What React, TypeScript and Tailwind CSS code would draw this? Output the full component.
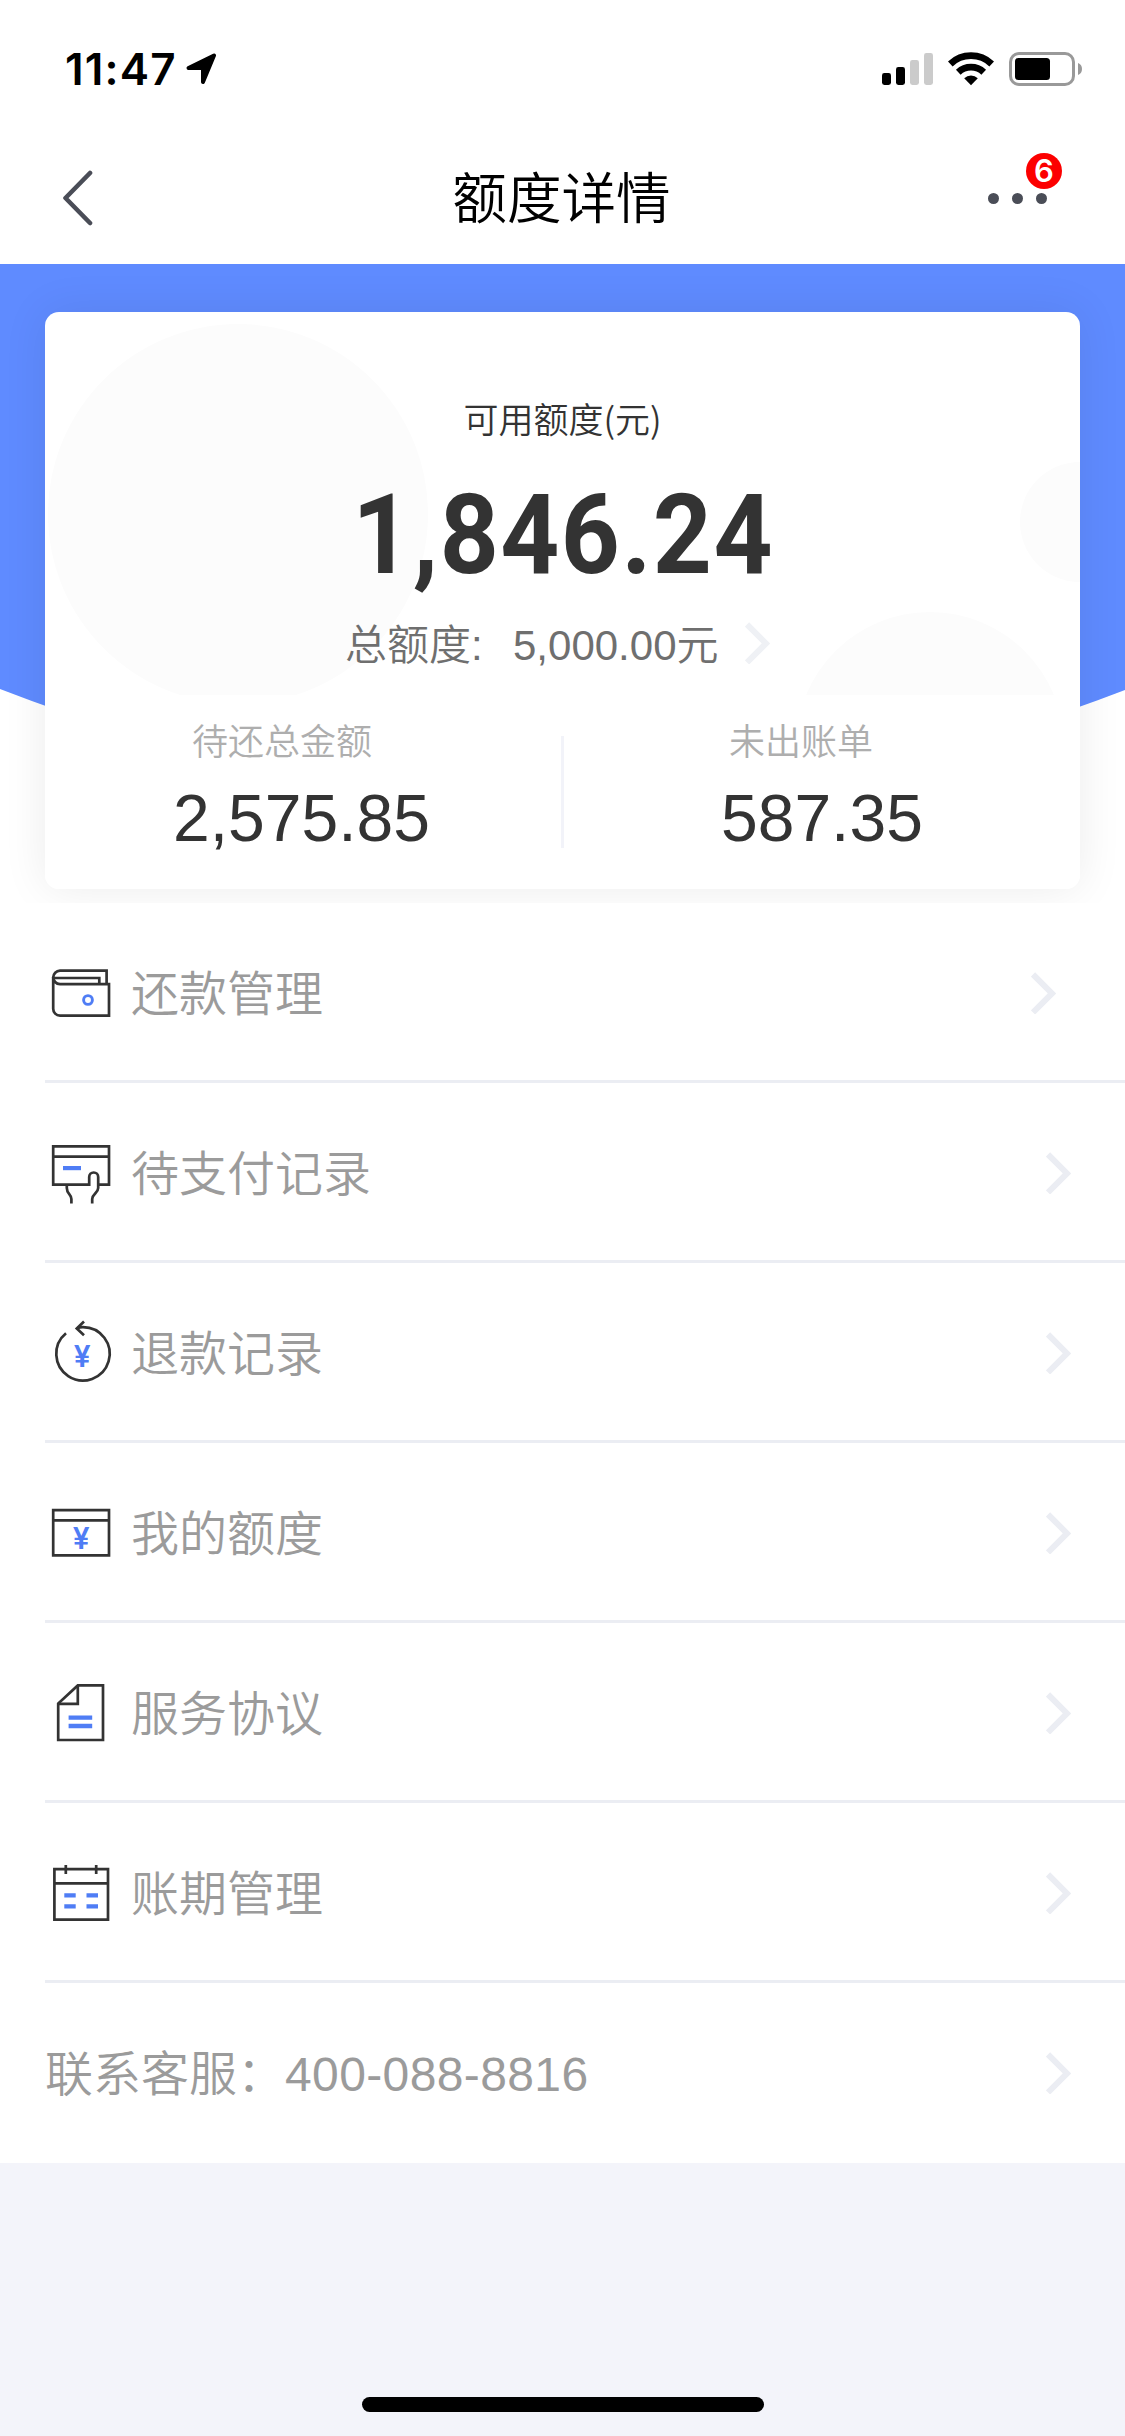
import type { ReactNode } from "react";

const DARK = "#333333";
const BLUE = "#4f7df5";

function Chevron({ className = "", color = "#ebedf3" }: { className?: string; color?: string }) {
  return (
    <svg width="26" height="42" viewBox="0 0 26 42" fill="none" className={className}>
      <path d="M2 2.4 L21 21.4 L2 40.4" stroke={color} strokeWidth="6" />
    </svg>
  );
}

function Icon({ children }: { children: ReactNode }) {
  return (
    <svg width="66" height="66" viewBox="0 0 66 66" fill="none" stroke={DARK} strokeWidth="2.7" className="mt-[3px] shrink-0">
      {children}
    </svg>
  );
}

function Yen({ x, y }: { x: number; y: number }) {
  return (
    <text x={x} y={y} textAnchor="middle" fill={BLUE} stroke="none" className="font-['Inter'] text-[30px] font-semibold">
      ¥
    </text>
  );
}

const WalletIcon = (
  <Icon>
    <path d="M5.2 17.5 A7 7 0 0 1 12 10.6 H58.6 V24" />
    <path d="M6 18 H51.3 V24" />
    <path d="M5.2 17 A7 7 0 0 0 12 24.2 H61 V55.7 H12 A7 7 0 0 1 5.2 48.7 Z" />
    <circle cx="40" cy="40" r="4.4" stroke={BLUE} strokeWidth="2.9" />
  </Icon>
);

const CardHandIcon = (
  <Icon>
    <path d="M41.2 44.7 H5.2 V6.4 H61 V44.7 H50" />
    <path d="M5.2 16.7 H61" />
    <path d="M15 28.1 H33" stroke={BLUE} strokeWidth="4.2" />
    <path d="M41.2 45.9 V37 A4.5 4.5 0 0 1 50.2 37 V48 C50.2 53 44.2 54 44.2 59 V63.6" />
    <path d="M18.8 44.7 V48 C18.8 54 23.4 54 23.4 59 V63.6" />
  </Icon>
);

const RefundIcon = (
  <Icon>
    <path d="M29.5 8 C32 7.1 34.5 7.1 34.8 7.1 A26.7 26.7 0 1 1 18 13.2" />
    <path d="M36 1.6 L28.8 8.4 L36 15.2" />
    <Yen x={34.3} y={46.7} />
  </Icon>
);

const LimitIcon = (
  <Icon>
    <path d="M5.2 10.2 H61 V55.3 H5.2 Z M5.2 20.4 H61" />
    <Yen x={33.2} y={49.4} />
  </Icon>
);

const DocumentIcon = (
  <Icon>
    <path d="M29.8 5.4 H55 V60 H10.2 V23.6 Z" />
    <path d="M29.8 5.4 V23.8 H10.2" />
    <path d="M20.6 37.7 H44.2 M20.6 46 H44.2" stroke={BLUE} strokeWidth="4.3" />
  </Icon>
);

const CalendarIcon = (
  <Icon>
    <path d="M6.4 9.2 H60 V59.6 H6.4 Z M6.4 23.3 H60" />
    <path d="M17.8 5 V14 M48.2 5 V14" />
    <path d="M16.3 35.3 H27.7 M38.5 35.3 H50 M16.3 46.3 H27.7 M38.5 46.3 H50" stroke={BLUE} strokeWidth="4.3" />
  </Icon>
);

const rows = [
  { label: "还款管理", icon: WalletIcon, pad: "pr-[68px]" },
  { label: "待支付记录", icon: CardHandIcon, pad: "pr-[53px]" },
  { label: "退款记录", icon: RefundIcon, pad: "pr-[53px]" },
  { label: "我的额度", icon: LimitIcon, pad: "pr-[53px]" },
  { label: "服务协议", icon: DocumentIcon, pad: "pr-[53px]" },
  { label: "账期管理", icon: CalendarIcon, pad: "pr-[53px]" },
];

function StatusBar() {
  return (
    <div className="flex h-[132px] items-start justify-between bg-white pr-[43px] pl-[65px]">
      <div className="flex gap-[8px] pt-[47px]">
        <span className="w-[113px] font-['Inter'] text-[44px] leading-[44px] font-semibold tracking-[1.2px] whitespace-nowrap text-black">11:47</span>
        <svg width="30" height="31" viewBox="0 0 30 31" className="mt-[6px]">
          <path d="M28 2.5 L17 29 V15 H2.5 Z" fill="#000" stroke="#000" strokeWidth="4" strokeLinejoin="round" />
        </svg>
      </div>
      <div className="flex gap-[15px] pt-[52px]">
        <svg width="51" height="34" viewBox="0 0 51 34">
          <rect x="0" y="21" width="9" height="12" rx="2.4" fill="#000" />
          <rect x="14" y="15" width="9" height="18" rx="2.4" fill="#000" />
          <rect x="28" y="8" width="9" height="25" rx="2.4" fill="#cbcbcb" />
          <rect x="42" y="1" width="9" height="32" rx="2.4" fill="#cbcbcb" />
        </svg>
        <svg width="46" height="34" viewBox="0 0 46 34" fill="none" stroke="#000" strokeWidth="6.8">
          <path d="M2.3 12 A30 30 0 0 1 43.7 12" />
          <path d="M10.3 20.2 A18.5 18.5 0 0 1 35.7 20.2" />
          <path d="M23 33.2 L16.2 26.2 A10 10 0 0 1 29.8 26.2 Z" fill="#000" stroke="none" />
        </svg>
        <svg width="73" height="34" viewBox="0 0 73 34">
          <rect x="1.5" y="1.5" width="63" height="31" rx="8.5" fill="none" stroke="#999" strokeWidth="3" />
          <rect x="6" y="6" width="35" height="22" rx="3.5" fill="#000" />
          <path d="M69 11 A6.5 6.5 0 0 1 69 23 Z" fill="#999" />
        </svg>
      </div>
    </div>
  );
}

function NavBar() {
  return (
    <header className="flex h-[132px] items-center justify-between bg-white pr-[78px] pl-[62px]">
      <svg width="61" height="56" viewBox="0 0 61 56" fill="none">
        <path d="M28 3 L3.5 28 L28 53" stroke="#4a4d57" strokeWidth="4.6" strokeLinecap="round" strokeLinejoin="round" />
      </svg>
      <h1 className="mt-[3px] ml-[12px] text-center text-[54.6px] leading-[54px] font-[350] whitespace-nowrap text-black">额度详情</h1>
      <div className="relative flex justify-end gap-[13px]">
        <span className="size-[11px] rounded-full bg-[#4a4d57]" />
        <span className="size-[11px] rounded-full bg-[#4a4d57]" />
        <span className="size-[11px] rounded-full bg-[#4a4d57]" />
        <span className="absolute -top-[40px] -right-[15px] flex size-[36px] items-center justify-center rounded-full bg-[#fc0000] font-['Inter'] text-[31px] leading-none font-semibold text-white">
          6
        </span>
      </div>
    </header>
  );
}

function SummaryCard() {
  return (
    <section className="relative h-[577px] w-[1035px] overflow-hidden rounded-[14px] bg-white">
      <svg width="1035" height="383" viewBox="0 0 1035 383" fill="#fcfcfc" className="absolute top-0 left-0">
        <circle cx="193" cy="202" r="190" />
        <circle cx="1035" cy="210" r="60" />
        <circle cx="885" cy="434" r="134" />
      </svg>
      <div className="relative flex flex-col">
        <p className="mt-[88px] text-center font-['Noto_Sans_CJK_SC'] text-[35px] leading-[36px] font-[350] text-[#333]">可用额度(元)</p>
        <p className="mt-[43px] text-center font-['Roboto'] text-[112px] leading-[112px] font-bold text-[#333]">
          <span className="inline-block scale-x-[0.92] pl-[2px] tracking-[1.6px]">1,846.24</span>
        </p>
        <div className="mt-[34px] flex h-[42px] items-center pl-[300px] text-[42px] leading-[42px] font-[350] whitespace-nowrap text-[#6f6f6f]">
          <span className="w-[168px]">总额度:</span>
          <span>5,000.00元</span>
          <Chevron className="-mt-[6px] ml-[26px]" color="#eff1f5" />
        </div>
        <div className="mt-[58px] flex">
          <div className="w-[516px]">
            <p className="pl-[147px] text-[36px] leading-[36px] font-[350] text-[#aeaeae]">待还总金额</p>
            <p className="mt-[24px] pl-[128px] text-[66px] leading-[66px] text-[#333]">2,575.85</p>
          </div>
          <div className="mt-[11px] h-[112px] w-[3px] bg-[#f2f3f9]" />
          <div>
            <p className="pl-[165px] text-[36px] leading-[36px] font-[350] text-[#aeaeae]">未出账单</p>
            <p className="mt-[24px] pl-[157px] text-[66px] leading-[66px] text-[#333]">587.35</p>
          </div>
        </div>
      </div>
    </section>
  );
}

export default function App() {
  return (
    <main className="flex h-[2436px] w-[1125px] flex-col overflow-hidden bg-[#f3f4fa] font-['Liberation_Sans','Noto_Sans_CJK_SC',sans-serif]">
      <StatusBar />
      <NavBar />
      <div className="relative h-[639px] overflow-hidden bg-white">
        <svg width="1125" height="639" viewBox="0 0 1125 639" className="absolute top-0 left-0">
          <path d="M0 0 H1125 V426 Q562 643 0 425 Z" fill="#5f8bff" />
        </svg>
        <div className="relative mx-[45px] mt-[48px] rounded-[14px] shadow-[0_0_45px_rgba(0,0,0,0.08)]">
          <SummaryCard />
        </div>
      </div>
      <ul className="flex flex-col bg-white text-[48px] leading-[48px] font-[350] text-[#9b9b9b]">
        {rows.map((row) => (
          <li key={row.label} className={`ml-[45px] flex h-[180px] items-center border-b-[3px] border-[#ebedf3] pl-[3px] ${row.pad}`}>
            {row.icon}
            <span className="mt-[7px] ml-[17px] flex-1">{row.label}</span>
            <Chevron className="mt-[2px]" />
          </li>
        ))}
        <li className="ml-[45px] flex h-[180px] items-center pr-[53px]">
          <span className="mt-[4px] flex-1">
            联系客服：<span className="tracking-[0.38px]">400-088-8816</span>
          </span>
          <Chevron />
        </li>
      </ul>
      <div className="flex flex-1 items-end justify-center pb-[24px]">
        <div className="h-[15px] w-[402px] rounded-full bg-black" />
      </div>
    </main>
  );
}
